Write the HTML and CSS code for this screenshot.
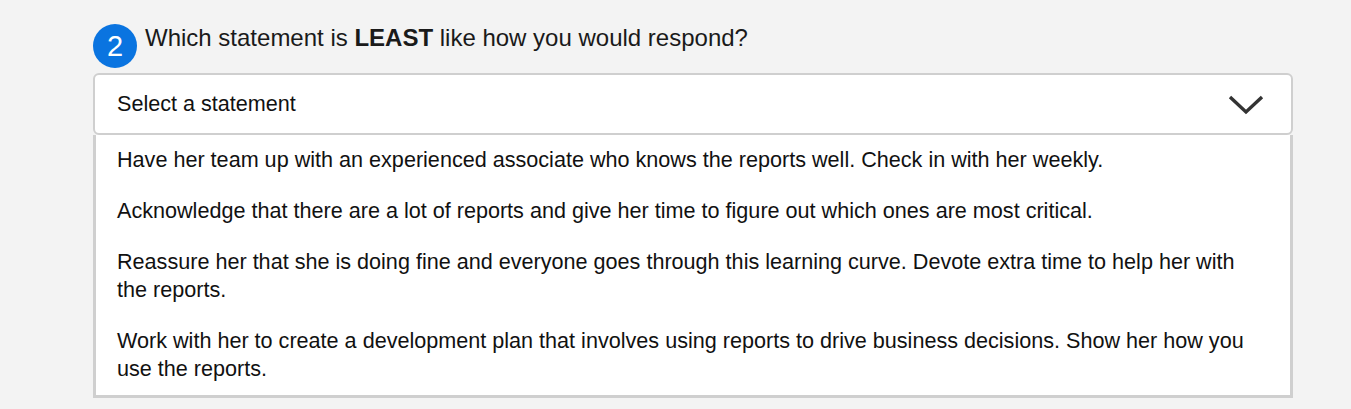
FILE: index.html
```html
<!DOCTYPE html>
<html>
<head>
<meta charset="utf-8">
<link rel="stylesheet" href="styles.css">
</head>
<body>
<div class="question">
  <div class="q-head">
    <span class="badge">2</span>
    <span class="q-text">Which statement is <b>LEAST</b> like how you would respond?</span>
  </div>
  <div class="select">
    <span class="select-label">Select a statement</span>
    <svg class="chevron" width="36" height="22" viewBox="0 0 36 22"><path d="M2 3 L18 18 L34 3" fill="none" stroke="#333" stroke-width="3.4"/></svg>
  </div>
  <ul class="options">
    <li>Have her team up with an experienced associate who knows the reports well. Check in with her weekly.</li>
    <li>Acknowledge that there are a lot of reports and give her time to figure out which ones are most critical.</li>
    <li>Reassure her that she is doing fine and everyone goes through this learning curve. Devote extra time to help her with the reports.</li>
    <li>Work with her to create a development plan that involves using reports to drive business decisions. Show her how you use the reports.</li>
  </ul>
</div>
</body>
</html>
```
FILE: styles.css
```css
html, body {
  margin: 0;
  padding: 0;
  background: #f3f3f3;
  font-family: "Liberation Sans", Arial, sans-serif;
  color: #111;
}
.question {
  width: 1200px;
  margin-left: 93px;
  padding-top: 24px;
}
.q-head {
  display: flex;
  align-items: flex-start;
  height: 49px;
}
.badge {
  width: 44px;
  height: 44px;
  border-radius: 50%;
  background: #0a74e0;
  color: #fff;
  font-size: 29px;
  display: flex;
  align-items: center;
  justify-content: center;
  margin-top: 0;
  flex: none;
}
.q-text {
  font-size: 24px;
  margin-left: 8px;
  line-height: 27px;
  color: #1a1a1a;
}
.select {
  box-sizing: border-box;
  height: 62px;
  border: 2px solid #cfcfcf;
  border-radius: 6px;
  background: #fff;
  display: flex;
  align-items: center;
  justify-content: space-between;
  padding: 0 27px 0 22px;
}
.select-label {
  font-size: 21.6px;
  color: #111;
}
.chevron {
  display: block;
  margin-top: 2px;
}
.options {
  list-style: none;
  margin: 0;
  padding: 0 36px 0 21px;
  background: #fff;
  border: 3px solid #cfcfcf;
  border-top: 0;
  font-size: 21.6px;
  line-height: 28px;
  color: #111;
}
.options li {
  padding: 11px 0 12px;
}
.options li:last-child {
  padding-bottom: 12px;
}
```
